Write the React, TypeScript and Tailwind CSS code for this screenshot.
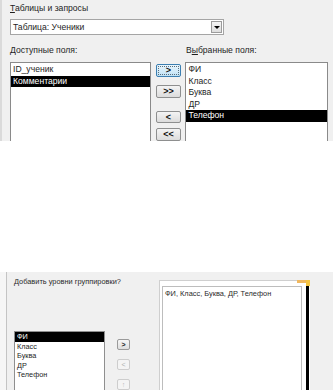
import React from 'react';

const font = { fontFamily: '"Liberation Sans", Arial, sans-serif' };

// Small Windows-style push button used between the list boxes
const WinButton: React.FC<{ label: string; focused?: boolean; disabled?: boolean; className?: string }> = ({
  label,
  focused = false,
  disabled = false,
  className = '',
}) => {
  if (focused) {
    return (
      <div className={`w-[25px] h-[13px] rounded-[2px] border border-[#3c7fb1] bg-gradient-to-b from-[#eaf6fd] to-[#bfe1f5] p-[1px] ${className}`}>
        <div className="w-full h-full border border-dotted border-[#5a6e7c] flex items-center justify-center text-[9px] leading-none font-bold text-[#111]">
          {label}
        </div>
      </div>
    );
  }
  return (
    <div
      className={`w-[25px] h-[13px] rounded-[2px] border flex items-center justify-center text-[9px] leading-none font-bold ${
        disabled ? 'border-[#c8c8c8] bg-[#f4f4f4] text-[#a8a8a8]' : 'border-[#8e8f8f] bg-gradient-to-b from-[#f4f4f4] to-[#dcdcdc] text-[#111]'
      } ${className}`}
    >
      {label}
    </div>
  );
};

const ListRow: React.FC<{ text: string; selected?: boolean; small?: boolean }> = ({ text, selected = false, small = false }) => (
  <div
    className={`${small ? 'h-[9.5px] leading-[9.5px] text-[7.3px] pl-[2px]' : 'h-[11.5px] leading-[11.5px] text-[8.6px] pl-[2px]'} whitespace-nowrap ${
      selected ? 'bg-black text-white' : 'text-[#1e1e1e]'
    }`}
  >
    {text}
  </div>
);

export default function App() {
  const available = ['ID_ученик', 'Комментарии'];
  const chosen = ['ФИ', 'Класс', 'Буква', 'ДР', 'Телефон'];

  return (
    <div className="w-[333px] h-[390px] bg-white flex flex-col overflow-hidden" style={font}>
      {/* Top: query wizard field picker */}
      <div className="h-[141px] bg-[#f0f0f0] border-l-2 border-[#dadada] flex flex-col pl-[8px] pr-[5px] text-[#1e1e1e]">
        <div className="mt-[2px] h-[12px] leading-[12px] text-[8.6px]">
          <span className="underline">Т</span>аблицы и запросы
        </div>

        {/* Combo box */}
        <div className="mt-[5px] w-[214px] h-[16px] bg-white border border-[#a5a5a5] flex items-center justify-between pl-[2px] pr-[1px]">
          <span className="text-[8.6px] leading-none">Таблица: Ученики</span>
          <div className="w-[11px] h-[12px] border border-[#9c9c9c] bg-gradient-to-b from-[#f5f5f5] to-[#dedede] flex items-center justify-center">
            <span className="block w-0 h-0 border-l-[3px] border-r-[3px] border-t-[3px] border-l-transparent border-r-transparent border-t-black" />
          </div>
        </div>

        {/* Column captions */}
        <div className="mt-[9px] flex h-[12px] leading-[12px] text-[8.6px]">
          <div className="w-[176px]">
            <span className="underline">Д</span>оступные поля:
          </div>
          <div>
            В<span className="underline">ы</span>бранные поля:
          </div>
        </div>

        {/* Lists and move buttons */}
        <div className="mt-[6px] flex flex-1 min-h-0">
          <div className="w-[141px] bg-white border-l border-t border-r border-[#8a8a8a] pt-[1px]">
            {available.map((f) => (
              <ListRow key={f} text={f} selected={f === 'Комментарии'} />
            ))}
          </div>
          <div className="w-[35px] flex flex-col items-center pl-[1px]">
            <WinButton label=">" focused className="mt-[2px]" />
            <WinButton label=">>" className="mt-[8px]" />
            <WinButton label="<" className="mt-[13px]" />
            <WinButton label="<<" className="mt-[5px]" />
          </div>
          <div className="w-[143px] bg-white border-l border-t border-r border-[#8a8a8a] pt-[1px]">
            {chosen.map((f) => (
              <ListRow key={f} text={f} selected={f === 'Телефон'} />
            ))}
          </div>
        </div>
      </div>

      {/* gap between the two screenshots */}
      <div className="h-[135px] bg-white" />

      {/* Bottom: report wizard grouping levels */}
      <div className="flex-1 flex bg-[#f0f0f0]">
        <div className="w-[7px] bg-[#f6f6f6] border-r border-[#c4c4c4]" />
        <div className="flex-1 flex pl-[7px]">
          <div className="w-[145px] flex flex-col">
            <div className="mt-[4px] h-[11px] leading-[11px] text-[7.4px] text-[#2a2a2a] whitespace-nowrap">
              Добавить уровни группировки?
            </div>
            <div className="mt-[44px] flex flex-1">
              <div className="w-[91px] bg-white border-l border-t border-r border-[#8f8f8f]">
                {chosen.map((f) => (
                  <ListRow key={f} text={f} selected={f === 'ФИ'} small />
                ))}
              </div>
              <div className="ml-[12px] flex flex-col">
                <div className="mt-[8px] w-[13px] h-[11px] rounded-[2px] border border-[#9a9a9a] bg-gradient-to-b from-[#f6f6f6] to-[#dedede] flex items-center justify-center text-[7px] font-bold leading-none text-[#222]">
                  &gt;
                </div>
                <div className="mt-[9px] w-[13px] h-[11px] rounded-[2px] border border-[#cdcdcd] bg-[#f4f4f4] flex items-center justify-center text-[7px] leading-none text-[#b0b0b0]">
                  &lt;
                </div>
                <div className="mt-[9px] w-[13px] h-[11px] rounded-[2px] border border-[#cdcdcd] bg-[#f4f4f4] flex items-center justify-center text-[7px] leading-none text-[#b8b8b8]">
                  ↑
                </div>
              </div>
            </div>
          </div>

          {/* Preview of grouping */}
          <div className="relative mt-[8px] w-[151px] bg-white border-l border-t border-[#cfcfcf] flex">
            <div className="mt-[5px] ml-[2px] w-[140px] border-l border-t border-r border-[#bdbdbd] pl-[2px] pt-[2px]">
              <div className="text-[7.4px] leading-[10px] text-[#2a2a2a] whitespace-nowrap">ФИ, Класс, Буква, ДР, Телефон</div>
            </div>
            <div className="ml-[4px] mt-[3px] w-[3px] bg-black" />
            <div className="absolute -top-[1px] right-0 w-[13px] h-[3px] bg-[#f0b860]" />
            <div className="absolute -top-[1px] right-0 w-[4px] h-[6px] bg-[#f5c542]" />
          </div>
        </div>
      </div>
    </div>
  );
}
